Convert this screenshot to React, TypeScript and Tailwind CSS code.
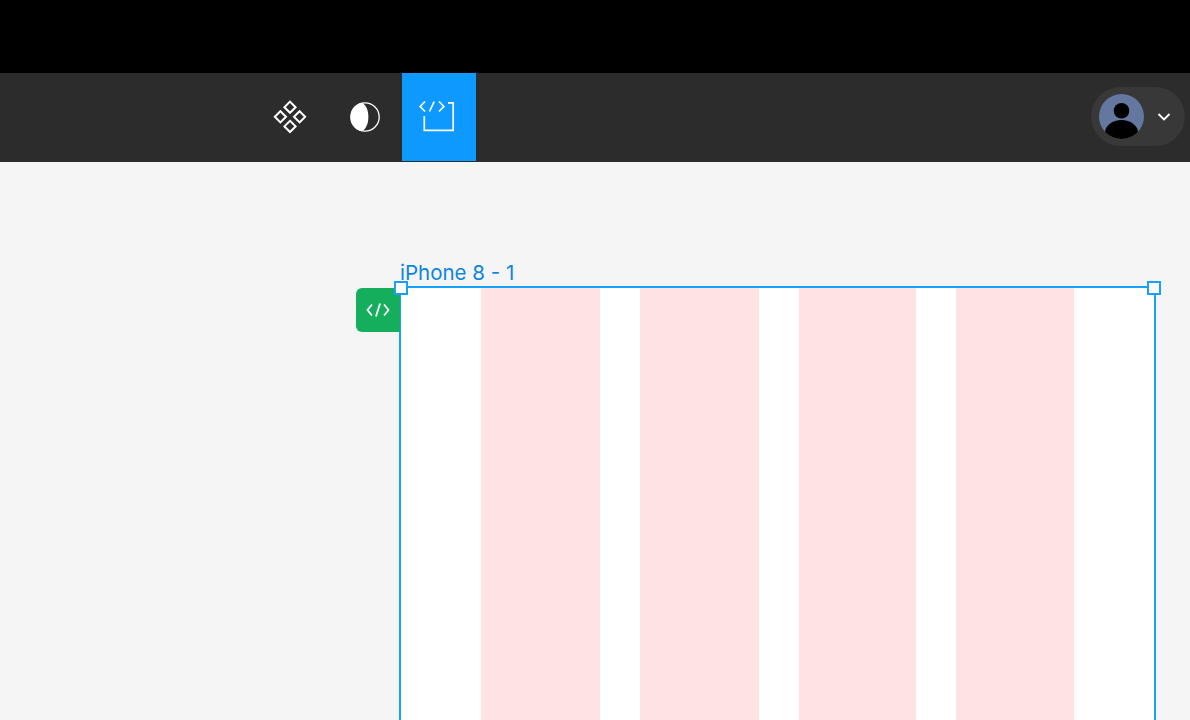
import React from "react";

const ComponentIcon = () => (
  <svg width="34" height="34" viewBox="0 0 34 34" fill="none" stroke="white" strokeWidth="2" className="-mt-0.5">
    <path d="M17 1.6 L22.6 7.2 L17 12.8 L11.4 7.2 Z" />
    <path d="M26.6 11.2 L32.2 16.8 L26.6 22.4 L21 16.8 Z" />
    <path d="M7.4 11.2 L13 16.8 L7.4 22.4 L1.8 16.8 Z" />
    <path d="M17 20.8 L22.6 26.4 L17 32 L11.4 26.4 Z" />
  </svg>
);

const ContrastIcon = () => (
  <svg width="32" height="32" viewBox="0 0 32 32" fill="none" className="-mt-0.5 ml-px">
    <circle cx="16" cy="16" r="14.2" stroke="white" strokeWidth="1.3" />
    <path d="M13 1.8 C 6.5 2.8 1.8 8.8 1.8 16 C 1.8 23.2 6.5 29.2 13 30.2 C 21.5 26 21.5 6 13 1.8 Z" fill="white" />
  </svg>
);

const CodeFrameIcon = () => (
  <svg width="40" height="34" viewBox="0 0 40 34" fill="none" stroke="white" strokeWidth="1.7">
    <path d="M6 1.5 L1.2 6.5 L6 11.5" />
    <path d="M10.5 11.5 L15.2 1.5" />
    <path d="M20 1.5 L24.8 6.5 L20 11.5" />
    <path d="M29 2.8 H34.2 V30.4 H5.3 V16" />
  </svg>
);

const Avatar = () => (
  <svg width="45" height="45" viewBox="0 0 45 45">
    <clipPath id="avatar-clip">
      <circle cx="22.5" cy="22.5" r="22.5" />
    </clipPath>
    <g clipPath="url(#avatar-clip)">
      <rect width="45" height="45" fill="#64779f" />
      <circle cx="22.5" cy="16.7" r="7.8" fill="black" />
      <ellipse cx="22.5" cy="38.5" rx="16.5" ry="12.5" fill="black" />
    </g>
  </svg>
);

const Chevron = () => (
  <svg width="14" height="10" viewBox="0 0 14 10" fill="none" stroke="white" strokeWidth="1.9">
    <path d="M1.5 2 L7 7.5 L12.5 2" />
  </svg>
);

const Handle = ({ className }: { className: string }) => (
  <div className={`absolute h-[14px] w-[14px] border-[2.5px] border-[#18a0fb] bg-white ${className}`} />
);

const App: React.FC = () => {
  return (
    <div className="flex h-[720px] w-[1190px] flex-col overflow-hidden bg-[#f5f5f5] font-['Inter',sans-serif]">
      <div className="h-[73px] shrink-0 bg-black" />
      <div className="flex h-[89px] shrink-0 items-center bg-[#2c2c2c] pl-[253px] pr-[5px]">
        <div className="flex h-full w-[74px] items-center justify-center">
          <ComponentIcon />
        </div>
        <div className="flex h-full w-[74px] items-center justify-center">
          <ContrastIcon />
        </div>
        <div className="ml-px flex h-[88px] w-[74px] items-center justify-center self-start bg-[#0d99ff]">
          <CodeFrameIcon />
        </div>
        <div className="ml-auto -mt-[2px] flex h-[59px] w-[94px] items-center rounded-[30px] bg-[#383838] pl-2">
          <Avatar />
          <span className="ml-[13px] flex">
            <Chevron />
          </span>
        </div>
      </div>
      <div className="ml-[399px] mt-[124px] w-[757px] flex-1">
        <div className="relative h-full border-2 border-b-0 border-[#18a0fb] bg-white">
          <div className="absolute -top-[27px] -left-[1px] text-[20.5px] leading-6 whitespace-nowrap text-[#0b85e0]">
            iPhone 8 - 1
          </div>
          <div className="absolute left-[-45px] top-0 flex h-[44px] w-[44px] items-center justify-center rounded-l-[6px] bg-[#14ae5c]">
            <svg width="24" height="16" viewBox="0 0 24 16" fill="none" stroke="white" strokeWidth="1.8">
              <path d="M6 2.5 L1.5 8 L6 13.5" />
              <path d="M10 14.5 L14 1.5" />
              <path d="M18 2.5 L22.5 8 L18 13.5" />
            </svg>
          </div>
          <Handle className="-top-[7px] -left-[7px]" />
          <Handle className="-top-[7px] -right-[7px]" />
          <div className="flex h-full pl-[80px]">
            <div className="h-full w-[119px] bg-[#ffe3e3]" />
            <div className="ml-[40px] h-full w-[119px] bg-[#ffe3e3]" />
            <div className="ml-[40px] h-full w-[117px] bg-[#ffe3e3]" />
            <div className="ml-[40px] h-full w-[118px] bg-[#ffe3e3]" />
          </div>
        </div>
      </div>
    </div>
  );
};

export default App;
